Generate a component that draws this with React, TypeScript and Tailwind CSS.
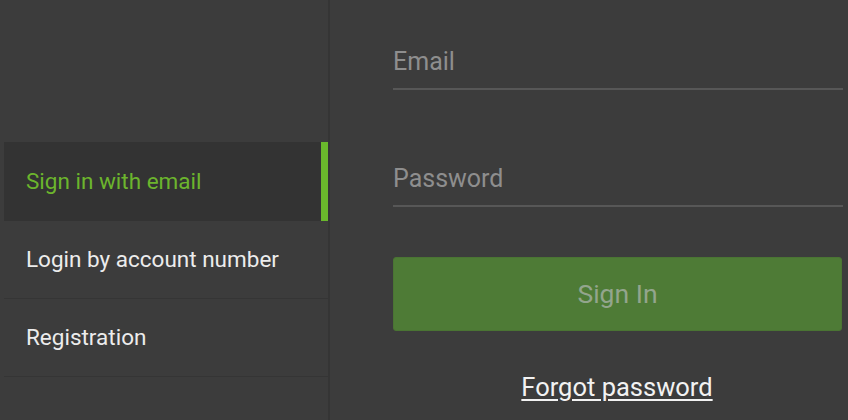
import React from "react";

const items = [
  { id: "email", label: "Sign in with email", active: true },
  { id: "account", label: "Login by account number", active: false },
  { id: "register", label: "Registration", active: false },
];

export default function App() {
  return (
    <div
      className="flex h-[420px] w-[848px] overflow-hidden bg-[#3c3c3c]"
      style={{ fontFamily: "Roboto, 'Liberation Sans', sans-serif" }}
    >
      {/* Side menu */}
      <div className="w-[330px] shrink-0 border-r-2 border-[#353535] pt-[142px] pl-[4px]">
        {items.map((item) =>
          item.active ? (
            <div key={item.id} className="flex h-[79px] items-center bg-[#333333]">
              <span className="flex-1 pl-[22px] text-[22.5px] text-[#6cb52d]">{item.label}</span>
              <span className="h-full w-[7px] bg-[#6ab82c]" />
            </div>
          ) : (
            <div
              key={item.id}
              className="flex h-[78px] items-center border-b border-[#353535] pl-[22px] pt-px text-[22.5px] text-[#ececec]"
            >
              {item.label}
            </div>
          )
        )}
      </div>

      {/* Form */}
      <div className="flex flex-1 flex-col pl-[63px] pr-[5px] pt-[48px]">
        <input
          placeholder="Email"
          className="h-[42px] border-b-2 border-[#575757] bg-transparent pb-[14px] text-[25px] leading-[28px] text-white outline-none placeholder:text-[#8e8e8e]"
        />
        <input
          type="password"
          placeholder="Password"
          className="mt-[75px] h-[42px] border-b-2 border-[#575757] bg-transparent pb-[14px] text-[25px] leading-[28px] text-white outline-none placeholder:text-[#8e8e8e]"
        />
        <button className="mt-[50px] h-[74px] w-[449px] rounded-[3px] border border-[#4a7433] bg-[#4e7b36] text-[26.5px] text-[#93a58d]">
          Sign In
        </button>
        <a
          href="#"
          className="mt-[42px] self-center pr-[2px] text-[25.5px] leading-[28px] text-[#f2f2f2] underline underline-offset-[3px]"
        >
          Forgot password
        </a>
      </div>
    </div>
  );
}
